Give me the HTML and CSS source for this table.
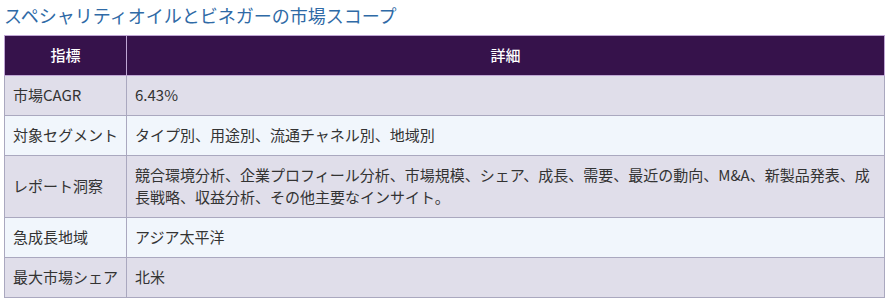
FILE: index.html
```html
<!DOCTYPE html>
<html lang="ja">
<head>
<meta charset="utf-8">
<link rel="stylesheet" href="styles.css">
</head>
<body>
<div class="wrap">
  <h2 class="title">スペシャリティオイルとビネガーの市場スコープ</h2>
  <table class="scope">
    <thead>
      <tr><th class="c1">指標</th><th>詳細</th></tr>
    </thead>
    <tbody>
      <tr class="odd"><td class="c1">市場CAGR</td><td>6.43%</td></tr>
      <tr class="even"><td class="c1">対象セグメント</td><td>タイプ別、用途別、流通チャネル別、地域別</td></tr>
      <tr class="odd"><td class="c1">レポート洞察</td><td>競合環境分析、企業プロフィール分析、市場規模、シェア、成長、需要、最近の動向、M&amp;A、新製品発表、成長戦略、収益分析、その他主要なインサイト。</td></tr>
      <tr class="even"><td class="c1">急成長地域</td><td>アジア太平洋</td></tr>
      <tr class="odd"><td class="c1">最大市場シェア</td><td>北米</td></tr>
    </tbody>
  </table>
</div>
</body>
</html>
```

FILE: styles.css
```css
html, body {
  margin: 0;
  padding: 0;
  background: #ffffff;
}
.wrap {
  padding: 3px 6px 0 4px;
  font-family: "Noto Sans CJK JP", "Noto Sans", sans-serif;
}
.title {
  margin: 0 0 7px 0;
  font-size: 18px;
  font-weight: normal;
  line-height: 25px;
  color: #2f6aa6;
}
.scope {
  width: 100%;
  border-collapse: collapse;
  font-size: 15px;
  line-height: 22px;
  color: #333333;
}
.scope th {
  background: #36124b;
  color: #ffffff;
  font-weight: 500;
  text-align: center;
  padding: 8px 8px 9px;
  border: 1px solid #bfa6d4;
}
.scope td {
  padding: 8px 8px 9px;
  border: 1px solid #aaa8bf;
  text-align: left;
  vertical-align: middle;
}
.scope .c1 {
  width: 104px;
  white-space: nowrap;
}
.odd td {
  background: #e0deea;
}
.even td {
  background: #f1f6fc;
}
```
